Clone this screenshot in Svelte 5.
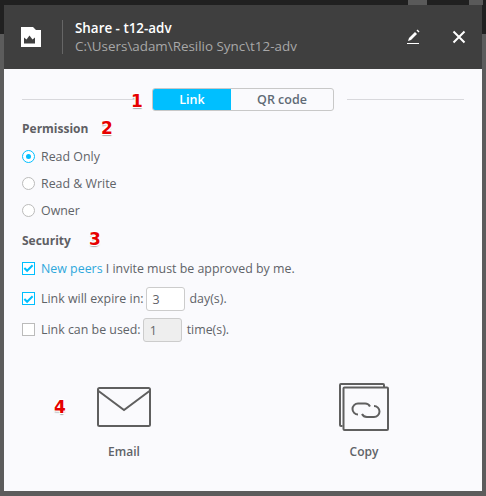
<script>
  let perm = $state('read');
</script>

<div class="screen">
  <div class="backdrop-top">
    <span class="chip one"></span>
    <span class="chip two"></span>
  </div>
  <div class="dialog">
    <header>
      <svg class="folder" width="20" height="20" viewBox="0 0 20 20">
        <path d="M0 0h12l3 3h5v17H0z" fill="#fff" />
        <path d="M3 16.500V10.500l2.500 2 3-4 3 4 2.500-2v6z" fill="#3f3f3f" />
      </svg>
      <div class="sep"></div>
      <div class="titles">
        <div class="title">Share - t12-adv</div>
        <div class="path">C:\Users\adam\Resilio Sync\t12-adv</div>
      </div>
      <svg class="pen" width="13" height="16" viewBox="0 0 13 16">
        <path d="M1 12 2 9 8 3 10 5 4 11z" fill="#fff" />
        <path d="M9.500 1.500 10.500 .5 12.500 2.500 11.500 3.500z" fill="#fff" />
        <rect x="0" y="14" width="12" height="1" fill="#fff" />
      </svg>
      <svg class="close" width="14" height="14" viewBox="0 0 14 14">
        <path d="M1.500 1.500 12.500 12.500M12.500 1.500 1.500 12.500" stroke="#fff" stroke-width="2" fill="none" />
      </svg>
    </header>

    <main>
      <div class="tabs-row">
        <div class="rule"></div>
        <div class="tabs">
          <span class="tab on">Link</span>
          <span class="tab">QR code</span>
        </div>
        <div class="rule"></div>
        <span class="mark m1">1</span>
      </div>

      <h3>Permission <span class="mark m2">2</span></h3>
      <div class="radios">
        <label class="opt"><span class="radio on"></span>Read Only</label>
        <label class="opt"><span class="radio"></span>Read &amp; Write</label>
        <label class="opt"><span class="radio"></span>Owner</label>
      </div>

      <h3 class="sec">Security <span class="mark m3">3</span></h3>
      <div class="checks">
        <div class="chk first">
          <span class="box on"><svg width="12" height="10" viewBox="0 0 12 10"><path d="M1.500 5 4.500 8 10.500 2" stroke="#00bfff" stroke-width="2.200" fill="none" /></svg></span>
          <span><span class="link">New peers</span> I invite must be approved by me.</span>
        </div>
        <div class="chk">
          <span class="box on"><svg width="12" height="10" viewBox="0 0 12 10"><path d="M1.500 5 4.500 8 10.500 2" stroke="#00bfff" stroke-width="2.200" fill="none" /></svg></span>
          <span>Link will expire in:</span>
          <span class="num">3</span>
          <span>day(s).</span>
        </div>
        <div class="chk">
          <span class="box"></span>
          <span>Link can be used:</span>
          <span class="num off">1</span>
          <span>time(s).</span>
        </div>
      </div>

      <div class="actions">
        <div class="action">
          <div class="ico">
            <svg width="54" height="40" viewBox="0 0 54 40">
              <rect x="1" y="1" width="52" height="38" rx="1.500" fill="none" stroke="#5f5f5f" stroke-width="2" />
              <path d="M1.500 4 27 23 52.500 4" fill="none" stroke="#5f5f5f" stroke-width="2" />
            </svg>
          </div>
          <span class="label">Email</span>
          <span class="mark m4">4</span>
        </div>
        <div class="action">
          <div class="ico">
            <svg width="50" height="48" viewBox="0 0 50 48">
              <path d="M3.500 43H2a1 1 0 0 1-1-1V2a1 1 0 0 1 1-1h42a1 1 0 0 1 1 1v2.500" fill="none" stroke="#5f5f5f" stroke-width="2" />
              <rect x="4.500" y="4.500" width="44.500" height="42.500" rx="1" fill="none" stroke="#5f5f5f" stroke-width="2" />
              <path d="M19 31.500a5.500 5.500 0 0 1 0-11h7a5.500 5.500 0 0 1 5 3" fill="none" stroke="#5f5f5f" stroke-width="2" />
              <path d="M35 23a5.500 5.500 0 0 1 0 11h-7a5.500 5.500 0 0 1-5-3" fill="none" stroke="#5f5f5f" stroke-width="2" />
            </svg>
          </div>
          <span class="label">Copy</span>
        </div>
      </div>
    </main>
  </div>
</div>

<style>
  :global(body) {
    margin: 0;
    background: #5c5c5c;
  }
  .screen {
    position: relative;
    width: 486px;
    height: 496px;
    overflow: hidden;
    box-sizing: border-box;
    padding: 5px 4px;
    font-family: "Open Sans", "Noto Sans", sans-serif;
    color: #5f6368;
    font-size: 12.4px;
  }
  .backdrop-top {
    position: absolute;
    left: 0; right: 0; top: 0;
    height: 34px;
    background: #202020;
  }
  .chip { position: absolute; top: 0; height: 5px; background: #5a5a5a; }
  .chip.one { left: 408px; width: 19px; }
  .chip.two { left: 469px; width: 14px; }
  .dialog {
    position: relative;
    height: 486px;
    background: #fafafd;
    display: flex;
    flex-direction: column;
  }
  header {
    height: 64px;
    flex: none;
    background: #3f3f3f;
    display: flex;
    align-items: center;
    padding: 0 16px 0 17px;
  }
  .folder { margin-right: 21px; margin-top: -1px; }
  .sep { width: 1px; height: 34px; background: #666; margin-right: 12px; }
  .titles { flex: 1; }
  .title { color: #fff; font-weight: 600; font-size: 13.4px; line-height: 18px; }
  .path { color: #a8a8a8; font-size: 13.4px; line-height: 19px; }
  .pen { margin-right: 32px; }
  main {
    flex: 1;
    padding: 0 18px;
    display: flex;
    flex-direction: column;
  }
  .tabs-row {
    position: relative;
    display: flex;
    align-items: center;
    margin-top: 19px;
    gap: 13px;
  }
  .rule { flex: 1; height: 1px; background: #d8d8dc; }
  .tabs {
    display: flex;
    width: 182px;
    height: 23px;
    border: 1px solid #c8c8c8;
    border-radius: 3px;
    box-sizing: border-box;
    overflow: hidden;
  }
  .tab {
    flex: 1;
    text-align: center;
    font-weight: 600;
    font-size: 12.5px;
    line-height: 21px;
    color: #606a75;
  }
  .tab.on {
    flex: none;
    width: 78px;
    background: #00bfff;
    color: #fff;
  }
  h3 {
    position: relative;
    margin: 9px 0 0;
    font-size: 12px;
    font-weight: 700;
    line-height: 18px;
    color: #5f5f64;
  }
  .sec { margin-top: 13px; }
  .radios { margin-top: 9px; display: flex; flex-direction: column; gap: 9px; }
  .opt { display: flex; align-items: center; gap: 6px; height: 18px; }
  .radio {
    width: 13px; height: 13px;
    box-sizing: border-box;
    border: 1px solid #bbb;
    border-radius: 50%;
    background: #fff;
    display: flex;
    align-items: center;
    justify-content: center;
  }
  .radio.on { border-color: #00bfff; }
  .radio.on::after {
    content: "";
    width: 5px; height: 5px;
    border-radius: 50%;
    background: #00bfff;
  }
  .checks { margin-top: 9px; display: flex; flex-direction: column; gap: 6px; }
  .chk { display: flex; align-items: center; min-height: 25px; gap: 4px; }
  .chk.first { min-height: 18px; margin-bottom: 3px; }
  .box {
    width: 13px; height: 13px;
    box-sizing: border-box;
    border: 1px solid #bbb;
    background: #fff;
    margin-right: 2px;
    display: flex;
    align-items: center;
    justify-content: center;
  }
  .box.on { border-color: #00bfff; }
  .link { color: #2ea8dc; }
  .num {
    width: 39px; height: 24px;
    box-sizing: border-box;
    border: 1px solid #ccc;
    border-radius: 3px;
    background: #fff;
    padding-left: 6px;
    line-height: 24px;
    margin: 0 1px 0 -2px;
  }
  .num.off { background: #eee; }
  .actions {
    display: flex;
    margin-top: 41px;
    padding-left: 74px;
    gap: 184px;
  }
  .action {
    position: relative;
    width: 56px;
    display: flex;
    flex-direction: column;
    align-items: center;
    font-weight: 600;
    font-size: 12px;
    color: #5f6368;
  }
  .ico {
    height: 48px;
    display: flex;
    align-items: center;
    justify-content: center;
  }
  .label { margin-top: 12px; }
  .mark {
    position: absolute;
    font-family: "DejaVu Sans", sans-serif;
    font-weight: 700;
    font-size: 17px;
    line-height: 18px;
    color: #e60000;
    text-shadow: 1px 1px 0 #fff, -1px 1px 0 #fff, 1px -1px 0 #fff, -1px -1px 0 #fff, 0 2px 1px #aaa;
  }
  .m1 { left: 109px; top: 4px; }
  .m2 { left: 79px; top: -1px; }
  .m3 { left: 67px; top: -2px; }
  .m4 { left: -42px; top: 15px; }
</style>
